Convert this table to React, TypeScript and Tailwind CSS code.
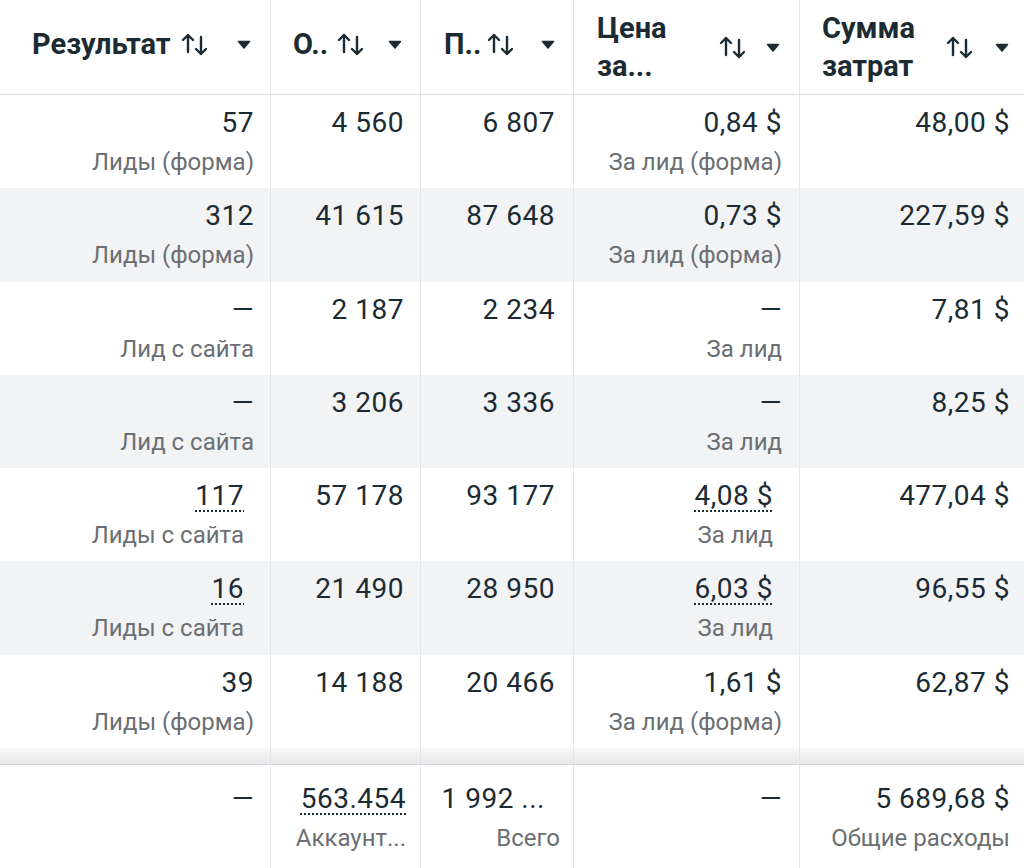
import React from 'react';

type Row = {
  cells: { value: string; sub?: string; dotted?: boolean; extra?: boolean }[];
  gray?: boolean;
};

const rows: Row[] = [
  {
    cells: [
      { value: '57', sub: 'Лиды (форма)' },
      { value: '4 560' },
      { value: '6 807' },
      { value: '0,84 $', sub: 'За лид (форма)' },
      { value: '48,00 $' },
    ],
  },
  {
    gray: true,
    cells: [
      { value: '312', sub: 'Лиды (форма)' },
      { value: '41 615' },
      { value: '87 648' },
      { value: '0,73 $', sub: 'За лид (форма)' },
      { value: '227,59 $' },
    ],
  },
  {
    cells: [
      { value: '—', sub: 'Лид с сайта' },
      { value: '2 187' },
      { value: '2 234' },
      { value: '—', sub: 'За лид' },
      { value: '7,81 $' },
    ],
  },
  {
    gray: true,
    cells: [
      { value: '—', sub: 'Лид с сайта' },
      { value: '3 206' },
      { value: '3 336' },
      { value: '—', sub: 'За лид' },
      { value: '8,25 $' },
    ],
  },
  {
    cells: [
      { value: '117', sub: 'Лиды с сайта', dotted: true, extra: true },
      { value: '57 178' },
      { value: '93 177' },
      { value: '4,08 $', sub: 'За лид', dotted: true, extra: true },
      { value: '477,04 $' },
    ],
  },
  {
    gray: true,
    cells: [
      { value: '16', sub: 'Лиды с сайта', dotted: true, extra: true },
      { value: '21 490' },
      { value: '28 950' },
      { value: '6,03 $', sub: 'За лид', dotted: true, extra: true },
      { value: '96,55 $' },
    ],
  },
  {
    cells: [
      { value: '39', sub: 'Лиды (форма)' },
      { value: '14 188' },
      { value: '20 466' },
      { value: '1,61 $', sub: 'За лид (форма)' },
      { value: '62,87 $' },
    ],
  },
];

const padRight = ['pr-[16px]', 'pr-[16px]', 'pr-[18px]', 'pr-[17px]', 'pr-[14px]'];
const borders = ['border-r', 'border-r', 'border-r', 'border-r', ''];
const gridCols = 'grid grid-cols-[271px_150px_153px_226px_224px]';

const SortIcon = () => (
  <svg width="30" height="24" viewBox="0 0 30 24" fill="none" stroke="#1c2b33" strokeWidth="2.4" strokeLinecap="round" strokeLinejoin="round">
    <path d="M8 20V3M3 8l5-5 5 5" />
    <path d="M21 5v17M16 17l5 5 5-5" />
  </svg>
);

const Caret = () => (
  <svg width="14" height="9" viewBox="0 0 14 9">
    <path d="M1.5 1.5h11L7 8z" fill="#1c2b33" stroke="#1c2b33" strokeWidth="1.5" strokeLinejoin="round" />
  </svg>
);

const Header = () => (
  <div className={`${gridCols} h-[95px] border-b border-[#dadde1]`}>
    <div className="flex items-center border-r border-[#e4e6eb] pl-[32px] pr-[19px] pb-[6px]">
      <span className="text-[29px] font-bold leading-[38px]">Результат</span>
      <span className="ml-[9px]"><SortIcon /></span>
      <span className="ml-auto"><Caret /></span>
    </div>
    <div className="flex items-center border-r border-[#e4e6eb] pl-[22px] pr-[18px] pb-[6px]">
      <span className="text-[29px] font-bold leading-[38px]">О..</span>
      <span className="ml-[8px]"><SortIcon /></span>
      <span className="ml-auto"><Caret /></span>
    </div>
    <div className="flex items-center border-r border-[#e4e6eb] pl-[23px] pr-[18px] pb-[6px]">
      <span className="text-[29px] font-bold leading-[38px]">П..</span>
      <span className="ml-[5px]"><SortIcon /></span>
      <span className="ml-auto"><Caret /></span>
    </div>
    <div className="flex items-center border-r border-[#e4e6eb] pl-[23px] pr-[19px]">
      <div className="text-[29px] font-bold leading-[38px]">
        <div>Цена</div>
        <div>за...</div>
      </div>
      <div className="ml-auto flex items-center gap-[18px]">
        <SortIcon />
        <Caret />
      </div>
    </div>
    <div className="flex items-center pl-[22px] pr-[15px]">
      <div className="text-[29px] font-bold leading-[38px]">
        <div>Сумма</div>
        <div>затрат</div>
      </div>
      <div className="ml-auto flex items-center gap-[20px]">
        <SortIcon />
        <Caret />
      </div>
    </div>
  </div>
);

const Value = ({ text, dotted }: { text: string; dotted?: boolean }) => (
  <span className={dotted ? 'underline decoration-dotted decoration-2 underline-offset-[5px]' : ''}>{text}</span>
);

const num = 'text-[28px] leading-[34px] tracking-[0.5px]';
const sub = 'mt-[7px] text-[24px] leading-[30px] text-[#6b6f73]';

export default function App() {
  return (
    <div className="w-[1024px] h-[868px] overflow-hidden bg-white text-[#1c2b33] font-['Roboto','Liberation_Sans',sans-serif]">
      <Header />
      {rows.map((row, i) => (
        <div key={i} className={`${gridCols} h-[93.3px] ${row.gray ? 'bg-[#f2f3f5]' : 'bg-white'}`}>
          {row.cells.map((c, j) => (
            <div
              key={j}
              className={`${borders[j]} border-[#e4e6eb] pt-[11px] text-right ${c.extra ? 'pr-[26px]' : padRight[j]}`}
            >
              <div className={num}>
                <Value text={c.value} dotted={c.dotted} />
              </div>
              {c.sub && <div className={sub}>{c.sub}</div>}
            </div>
          ))}
        </div>
      ))}
      <div className={`${gridCols} h-[17px] bg-gradient-to-b from-[#fafafa] to-[#e6e7e8] border-b border-[#d6d8db]`}>
        {borders.map((b, j) => (
          <div key={j} className={`${b} border-[#e4e6eb]`} />
        ))}
      </div>
      <div className={`${gridCols} h-[110px]`}>
        <div className={`border-r border-[#e4e6eb] pt-[17px] pr-[16px] text-right ${num}`}>—</div>
        <div className="border-r border-[#e4e6eb] pt-[17px] pr-[14px] text-right">
          <div className={num}>
            <Value text="563.454" dotted />
          </div>
          <div className={sub}>Аккаунт...</div>
        </div>
        <div className="border-r border-[#e4e6eb] pt-[17px] pr-[13px] text-right">
          <div className={`${num} mr-[15px]`}>1 992 ...</div>
          <div className={sub}>Всего</div>
        </div>
        <div className={`border-r border-[#e4e6eb] pt-[17px] pr-[17px] text-right ${num}`}>—</div>
        <div className="pt-[17px] pr-[14px] text-right">
          <div className={num}>5 689,68 $</div>
          <div className={sub}>Общие расходы</div>
        </div>
      </div>
    </div>
  );
}
